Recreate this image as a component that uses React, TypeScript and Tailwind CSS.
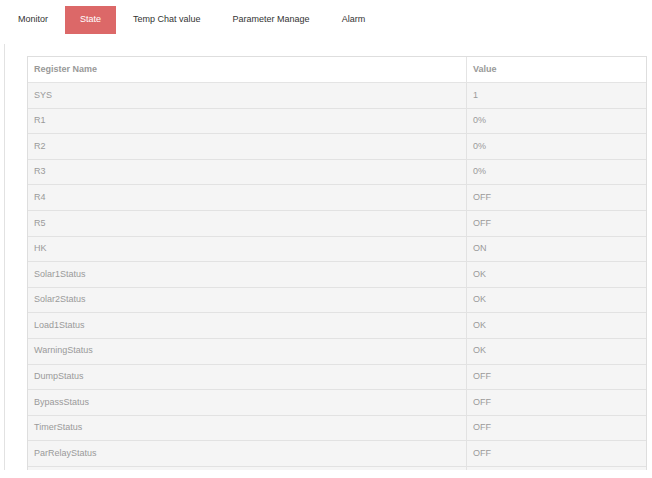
import React from "react";

const rows: [string, string][] = [
  ["SYS", "1"],
  ["R1", "0%"],
  ["R2", "0%"],
  ["R3", "0%"],
  ["R4", "OFF"],
  ["R5", "OFF"],
  ["HK", "ON"],
  ["Solar1Status", "OK"],
  ["Solar2Status", "OK"],
  ["Load1Status", "OK"],
  ["WarningStatus", "OK"],
  ["DumpStatus", "OFF"],
  ["BypassStatus", "OFF"],
  ["TimerStatus", "OFF"],
  ["ParRelayStatus", "OFF"],
  ["", ""],
];

const tabs = ["Monitor", "State", "Temp Chat value", "Parameter Manage", "Alarm"];

export default function App() {
  return (
    <div
      className="w-[652px] h-[478px] bg-white overflow-hidden text-[9px]"
      style={{ fontFamily: '"Liberation Sans", Arial, sans-serif' }}
    >
      <div className="flex gap-[2px] pl-[3px] pt-[6px] h-[44px]">
        {tabs.map((t) => (
          <div
            key={t}
            className={
              t === "State"
                ? "h-[28px] px-[15px] flex items-center bg-[#dc6868] text-white"
                : "h-[28px] px-[15px] flex items-center text-[#333]"
            }
          >
            {t}
          </div>
        ))}
      </div>
      <div className="ml-[4px] h-[426px] border-l border-[#e2e2e2] overflow-hidden pl-[22px] pt-[12px] pr-[5px]">
        <div className="border-t border-l border-r border-[#dedede]">
          <div className="grid grid-cols-[439px_1fr] h-[26px] border-b border-[#e4e4e4] bg-white font-bold text-[#999]">
            <div className="flex items-center pl-[6px] border-r border-[#e4e4e4]">Register Name</div>
            <div className="flex items-center pl-[6px]">Value</div>
          </div>
          {rows.map(([n, v], i) => (
            <div
              key={i}
              className="grid grid-cols-[439px_1fr] h-[25.6px] border-b border-[#e2e2e2] bg-[#f5f5f5] text-[#9a9a9a]"
            >
              <div className="flex items-center pl-[6px] border-r border-[#e2e2e2]">{n}</div>
              <div className="flex items-center pl-[6px]">{v}</div>
            </div>
          ))}
        </div>
      </div>
    </div>
  );
}
